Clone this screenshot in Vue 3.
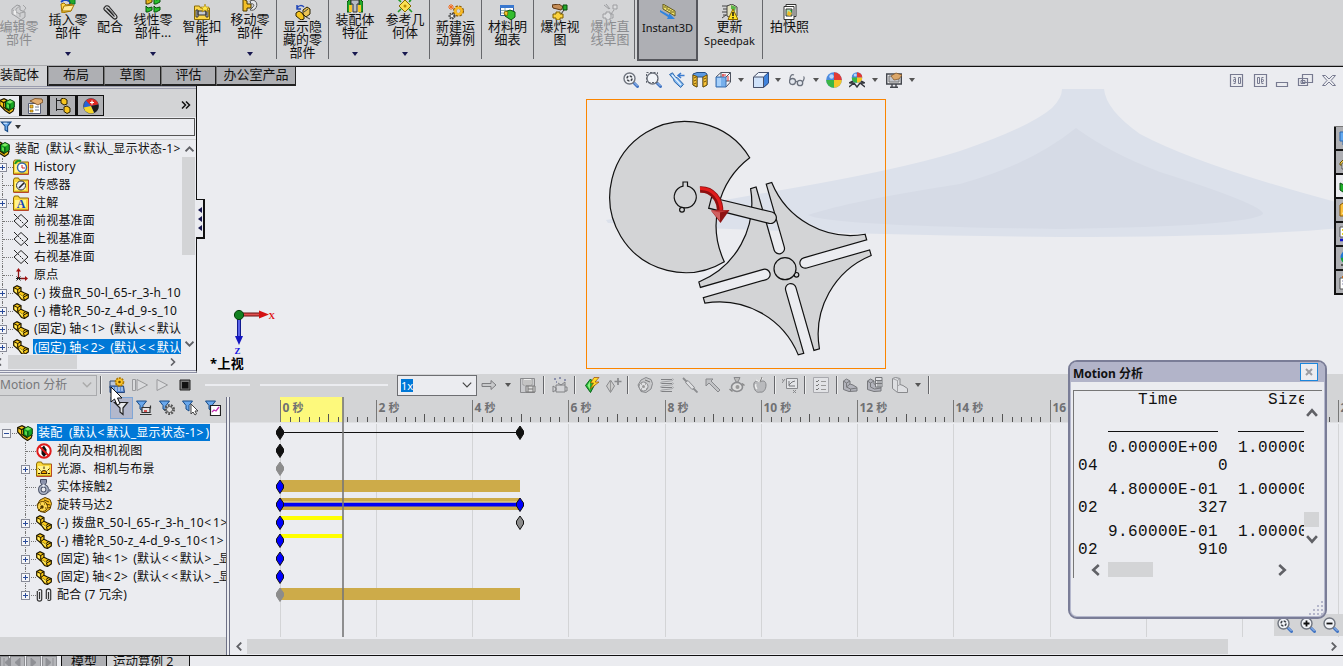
<script setup>
const ribbon = [
  { icon: 'edit-part', lines: ['编辑零', '部件'], w: 46, off: true },
  { icon: 'insert-part', lines: ['插入零', '部件'], w: 52, menu: true },
  { icon: 'clip', lines: ['配合'], w: 32 },
  { icon: 'pattern', lines: ['线性零', '部件...'], w: 54, menu: true },
  { icon: 'fastener', lines: ['智能扣', '件'], w: 44 },
  { icon: 'move-part', lines: ['移动零', '部件'], w: 53, menu: true, sep: true },
  { icon: 'show-part', lines: ['显示隐', '藏的零', '部件'], w: 52, sep: true },
  { icon: 'asm-feature', lines: ['装配体', '特征'], w: 52, menu: true },
  { icon: 'ref-geo', lines: ['参考几', '何体'], w: 49, menu: true, sep: true },
  { icon: 'gears', lines: ['新建运', '动算例'], w: 52, sep: true },
  { icon: 'bom', lines: ['材料明', '细表'], w: 52, sep: true },
  { icon: 'explode', lines: ['爆炸视', '图'], w: 52 },
  { icon: 'explode-off', lines: ['爆炸直', '线草图'], w: 49, off: true, sep: true },
  { icon: 'instant', lines: ['Instant3D'], w: 61, pressed: true },
  { icon: 'speedpak', lines: ['更新', 'Speedpak'], w: 66, sep: true },
  { icon: 'snapshot', lines: ['拍快照'], w: 53 },
]
const isLatin = (s) => /^[A-Za-z0-9]+$/.test(s)
const tabs = [
  { t: '布局', w: 56 },
  { t: '草图', w: 57 },
  { t: '评估', w: 55 },
  { t: '办公室产品', w: 80 },
]
const viewTools = [
  { i: 'zoom-fit', w: 23 }, { i: 'zoom-area', w: 23 }, { i: 'telescope', w: 23 }, { i: 'section', w: 23 },
  { i: 'orient', w: 23 }, { m: 1, w: 14 }, { i: 'cube', w: 25 }, { m: 1, w: 10 }, { i: 'glasses', w: 28 },
  { m: 1, w: 9 }, { i: 'ball', w: 28 }, { i: 'scene', w: 18 }, { m: 1, w: 18 }, { i: 'display', w: 20 }, { m: 1, w: 16 },
]
const featureTree = [
  { icon: 'history', t: 'History', plus: true },
  { icon: 'sensor', t: '传感器' },
  { icon: 'annot', t: '注解', plus: true },
  { icon: 'plane', t: '前视基准面' },
  { icon: 'plane', t: '上视基准面' },
  { icon: 'plane', t: '右视基准面' },
  { icon: 'origin', t: '原点' },
  { icon: 'part', t: '(-) 拨盘R_50-l_65-r_3-h_10', plus: true },
  { icon: 'part', t: '(-) 槽轮R_50-z_4-d_9-s_10', plus: true },
  { icon: 'part', t: '(固定) 轴<1> (默认<<默认', plus: true },
  { icon: 'part', t: '(固定) 轴<2> (默认<<默认', plus: true, sel: true },
]
const motionTree = [
  { icon: 'no-view', t: '视向及相机视图' },
  { icon: 'light', t: '光源、相机与布景', plus: true },
  { icon: 'contact', t: '实体接触2' },
  { icon: 'motor', t: '旋转马达2' },
  { icon: 'part', t: '(-) 拨盘R_50-l_65-r_3-h_10<1>', plus: true },
  { icon: 'part', t: '(-) 槽轮R_50-z_4-d_9-s_10<1>', plus: true },
  { icon: 'part', t: '(固定) 轴<1> (默认<<默认>_显', plus: true },
  { icon: 'part', t: '(固定) 轴<2> (默认<<默认>_显', plus: true },
  { icon: 'mates', t: '配合 (7 冗余)', plus: true },
]
const segs = (t) => t.split(/([<>])/).filter((s) => s !== '')
const isAngle = (s) => s === '<' || s === '>'
const rootName = '装配\u00a0 (默认<默认_显示状态-1>'
const motionTools = [
  { i: 'arrow-right', w: 24 }, { m: 1, w: 14 }, { i: 'save', w: 26 }, { s: 1, w: 5 }, { i: 'wizard', w: 27 },
  { s: 1, w: 4 }, { i: 'autokey', w: 29 }, { i: 'addkey', w: 16 }, { s: 1, w: 12 }, { i: 'motor-off', w: 21 },
  { i: 'spring', w: 24 }, { i: 'damper', w: 22 }, { i: 'force', w: 24 }, { i: 'contact-off', w: 23 },
  { i: 'apple', w: 24 }, { s: 1, w: 5 }, { i: 'plot', w: 26 }, { s: 1, w: 4 }, { i: 'props', w: 28 },
  { s: 1, w: 4 }, { i: 'sim1', w: 22 }, { i: 'sim2', w: 27 }, { i: 'sim3', w: 23 }, { m: 1, w: 14 }, { s: 1, w: 8 },
]
const X0 = 50.5
const STEP = 96.25
const majors = Array.from({ length: 12 }, (_, i) => ({ x: Math.floor(X0 + i * STEP - 0.5) + 0.5, label: i * 2 }))
const minors = Array.from({ length: 111 }, (_, i) => i).filter((i) => i % 10).map((i) => ({
  x: Math.floor(X0 + (i * STEP) / 10) + 0.5, mid: i % 5 === 0,
}))
const keys = [
  { x: 50, r: 0, c: '#111' }, { x: 290, r: 0, c: '#111' },
  { x: 50, r: 1, c: '#111' }, { x: 50, r: 2, c: '#8c8c8c' },
  { x: 50, r: 3, c: '#00f' }, { x: 50, r: 4, c: '#00f' }, { x: 290, r: 4, c: '#00f' },
  { x: 50, r: 5, c: '#00f' }, { x: 290, r: 5, c: '#8c8c8c' },
  { x: 50, r: 6, c: '#00f' }, { x: 50, r: 7, c: '#00f' }, { x: 50, r: 8, c: '#00f' },
  { x: 50, r: 9, c: '#8c8c8c' },
]
const results = [
  ['   0.00000E+00  1.00000', '04            0'],
  ['   4.80000E-01  1.00000', '02          327'],
  ['   9.60000E-01  1.00000', '02          910'],
]
const side = ['bubble', 'home', 'lib', 'file', 'palette', 'globe', 'doc']
</script>

<template>
  <div class="app">
    <svg class="defs" width="0" height="0">
      <symbol id="part" viewBox="0 0 16 16">
        <path d="M.7 2.500L4 .7l4 2v3.500l3 1.500 4.300 2v3.300L11.500 15.500 8.500 14.500 5.500 10.500 .7 6.500z" fill="#f9c716" stroke="#1d1600" stroke-width="1.200" />
        <path d="M.7 2.500l4 2L8 2.700M4.700 4.500v4L10.500 12l4.800-2.300M10.500 12l1 3.500M4.700 8.500L8 6.200M10 10.500l2.500-1.500" fill="none" stroke="#1d1600" />
        <path d="M1.700 4l2 1v3l-2-1.500zM6 9l4 2.500-.5 2L6 10z" fill="#ffee6a" />
      </symbol>
      <symbol id="asm" viewBox="0 0 16 16">
        <path d="M.7 2.500L5 .7l3 1.500v4l7 4-1 3-3.500 2.300L6 12.500.7 7z" fill="#f9c716" stroke="#1d1600" stroke-width="1.200" />
        <path d="M.7 2.500l4 2.200v4.500l6 4M4.700 4.700L8 2.500" fill="none" stroke="#1d1600" stroke-width="1.200" />
        <path d="M6.500 4L11 1.500l4.300 2.200v5.500l-4.500 3-4.300-2.500z" fill="#17a624" stroke="#07380b" />
        <path d="M7.500 4l3.500-1.800 3.300 1.500L11 5.500z" fill="#7bea62" /><path d="M8 6l2 1v3.500L8 9.300z" fill="#5fd84f" /><path d="M10.900 6v5.500" stroke="#07380b" />
      </symbol>
      <symbol id="folder" viewBox="0 0 16 16">
        <path d="M.5 15V3l1-2h4l1 2h9v12z" fill="#fbd83e" stroke="#8a6a00" />
        <path d="M2 5h11v8H2z" fill="#fff48f" />
        <path d="M15.500 3v12.500H.5" fill="none" stroke="#b9472a" />
      </symbol>
      <symbol id="history" viewBox="0 0 16 16">
        <use href="#folder" /><circle cx="9" cy="8.500" r="4.500" fill="#fff" stroke="#3465a8" stroke-width="1.400" />
        <path d="M9 6v3h3" fill="none" stroke="#c22" /><path d="M2 5c1-3 4-4 6-3" fill="none" stroke="#189a24" stroke-width="2" />
      </symbol>
      <symbol id="sensor" viewBox="0 0 16 16">
        <use href="#folder" /><circle cx="8" cy="8.500" r="4.500" fill="#e9eefa" stroke="#333" /><path d="M6 11l5-5" stroke="#222" stroke-width="1.600" />
      </symbol>
      <symbol id="annot" viewBox="0 0 16 16">
        <use href="#folder" /><text x="8" y="13" text-anchor="middle" font-family="Liberation Serif" font-weight="bold" font-size="12" fill="#1745b8">A</text>
      </symbol>
      <symbol id="light" viewBox="0 0 16 16">
        <use href="#folder" /><path d="M5 12.500a3 3 0 0 1 6 0zM8 8V5.500M4.500 9.500l-2-2M11.500 9.500l2-2M2 12.500h2M12 12.500h2" fill="#f6a800" stroke="#3a2000" />
      </symbol>
      <symbol id="plane" viewBox="0 0 16 16">
        <path d="M1 8l7-6.500L15 8l-7 6.500zM1 1l3 3M12 12l3 3" fill="none" stroke="#222" />
        <path d="M4.500 4.500l7 7" stroke="#222" stroke-dasharray="2 1" />
      </symbol>
      <symbol id="origin" viewBox="0 0 16 16">
        <path d="M5.500 12V4M6 11.500h7" stroke="#8b1515" stroke-width="1.300" /><path d="M3 4.500L5.500 1 8 4.500zM12 9l3 2.500-3 2.500z" fill="#a01010" />
        <path d="M3.500 9.500l4 4M7.500 9.500l-4 4M3 11.500h5" stroke="#222" />
      </symbol>
      <symbol id="no-view" viewBox="0 0 16 16">
        <circle cx="8" cy="8" r="6.700" fill="#fff" stroke="#e01b1b" stroke-width="2" />
        <path d="M8 2.500l2.500 4V11L8 14l-2.500-3V5z" fill="#111" /><path d="M3 3l10 10" stroke="#e01b1b" stroke-width="2" />
      </symbol>
      <symbol id="contact" viewBox="0 0 16 16">
        <path d="M4.500 .5h6v3L9 6H6L4.500 3.500z" fill="#8b93ac" stroke="#444a60" /><circle cx="7.500" cy="10.500" r="3.700" fill="none" stroke="#4c5468" stroke-width="3.600" />
        <circle cx="7.500" cy="10.500" r="3.700" fill="none" stroke="#aeb6c9" stroke-width="1.600" /><circle cx="7.500" cy="6.500" r="1.300" fill="#e8ecf5" /><path d="M12 9l3.500 2.500L12 14" fill="#777f95" />
      </symbol>
      <symbol id="motor" viewBox="0 0 16 16">
        <path d="M1 8l3-5 5-2.500 5 2 1.500 4L14 12l-5 3.500-5-1z" fill="#f4bd24" stroke="#5d3f00" />
        <circle cx="6.500" cy="9.500" r="5" fill="#ffd84e" stroke="#5d3f00" /><circle cx="6" cy="10" r="1.700" fill="#4a3200" />
        <path d="M2 14l4-4M8 3l5 2M10 7l4 1M12 11l3-1M4 7h1M8 7h1M9 11h1" stroke="#5d3f00" />
      </symbol>
      <symbol id="mates" viewBox="0 0 16 16">
        <path d="M.8 4v8a2.200 2.200 0 0 0 4.400 0V3.500a1.800 1.800 0 0 0-3.200 0M3 5v7M9.800 12V4a2.200 2.200 0 0 1 4.400 0v8.500a1.800 1.800 0 0 1-3.200 0M12 5v7" transform="translate(.5 0)" fill="none" stroke="#333" stroke-width="1.200" />
      </symbol>
      <symbol id="clip" viewBox="0 0 16 16">
        <path d="M2.500 3.500C3.500 1 6 1.500 7 2.500l7.500 9c1.500 2.500-1 4.500-3 3L2.500 6C1.500 5 2 4 2.500 3.500M4.500 4l8 8.500M7 5l5 6" fill="none" stroke="#222" stroke-width="1.100" />
        <path d="M3.500 5.500l8.500 8M6 3.500l7 8.500" stroke="#a3a4a8" stroke-width=".8" />
      </symbol>
      <symbol id="edit-part" viewBox="0 0 16 16">
        <path d="M1 5l5-4 3 1v4l5 2v5l-4 3-4-3-5-3z" fill="#cfd0d2" stroke="#9b9c9f" /><path d="M5 8V5l4-3M9 13V9l5-1M2 6l3 2 4 2M12 1l3 3-4 5" fill="none" stroke="#a3a4a6" />
        <path d="M3 6l2 1v4l-2-1z" fill="#eee" />
      </symbol>
      <symbol id="insert-part" viewBox="0 0 16 16">
        <path d="M1 5l4-3 6 3M10 1v7" fill="none" stroke="#1a49c2" stroke-width="2" /><path d="M8 1h7v6h-4z" fill="#24aa2a" stroke="#073" />
        <path d="M1 7l3-1 2 2 6-1-1 7-9 2z" fill="#ffd94b" stroke="#a37500" /><path d="M4 9l10-1-3 6H2z" fill="#ffec9b" stroke="#a37500" />
      </symbol>
      <symbol id="pattern" viewBox="0 0 16 16">
        <path d="M1 1v6h2l4-2V2L3 3z" fill="#e8b61b" stroke="#4b3900" /><path d="M9 1v6h2l4-2V2l-4 1zM1 9v6h2l4-2v-3l-4 1zM9 9v6h2l4-2v-3l-4 1z" fill="#2bc02f" stroke="#07520b" />
      </symbol>
      <symbol id="fastener" viewBox="0 0 16 16">
        <path d="M.5 15.500V2h5l1 2h9v11.500z" fill="#fbd64a" stroke="#8a6a00" /><path d="M2 6h2v7H2zM4 7h8v4H4zM12 6h2v7h-2z" fill="#c5cad3" stroke="#333" />
        <path d="M11 0l1 3 3 0-2 2 1 3-3-2-3 2 1-3-2-2h3z" fill="#ffe94c" stroke="#a98000" stroke-width=".6" />
      </symbol>
      <symbol id="move-part" viewBox="0 0 16 16">
        <path d="M1 2v12h4v-3h4V7H5V4z" fill="#f3bf27" stroke="#4b3900" /><path d="M8 4c6-3 9 4 5 8-2 2-5 1-5 1l3-3c2-2 0-4-2-3z" fill="#e4e6ea" stroke="#555" />
      </symbol>
      <symbol id="show-part" viewBox="0 0 16 16">
        <path d="M2 4c2-3 5-3 7-1M2 1v4h4" fill="none" stroke="#2247b8" stroke-width="1.500" /><path d="M1 9l3-2 3 2 2 3v3l-3 1-5-4z" fill="#f6c520" stroke="#2b2100" />
        <path d="M8 6l4-3 3 2v5l-4 3-3-3z" fill="#eac455" stroke="#2b2100" /><path d="M9 8l4-3M11 13l4 2" stroke="#444" />
      </symbol>
      <symbol id="asm-feature" viewBox="0 0 16 16">
        <path d="M0 5l4-4v14H0zM16 5l-4-4v14h4z" fill="#23a62b" stroke="#064d0a" /><path d="M2 8h3v7H2zM11 8h3v7h-3z" fill="#f5c42e" /><path d="M4 3h8v4h-2v8H6V7H4z" fill="#b7bcc6" stroke="#333" />
      </symbol>
      <symbol id="ref-geo" viewBox="0 0 16 16">
        <path d="M8 3l6 6-6 6-6-6z" fill="#fbe052" stroke="#876b00" /><circle cx="8" cy="9" r="1.500" fill="#b88b00" /><path d="M1 15l3-3M12 12l3 3M12 5l2-2M4 5L1 2" stroke="#1e9c26" stroke-width="1.600" /><path d="M11 1l3 1-1 3" fill="#1e9c26" />
      </symbol>
      <symbol id="gears" viewBox="0 0 16 16">
        <circle cx="10.500" cy="7" r="3.800" fill="none" stroke="#8a5a00" stroke-width="3.500" stroke-dasharray="2 1" /><circle cx="10.500" cy="7" r="3.300" fill="none" stroke="#f8ba24" stroke-width="2.400" />
        <circle cx="4" cy="12" r="2.500" fill="none" stroke="#444" stroke-width="2" stroke-dasharray="1.500 .8" /><circle cx="4" cy="12" r="1.700" fill="#eee" stroke="#777" /><path d="M1 1l4 4M5 1L1 5M3 0v6M0 3h6" stroke="#f26b1d" />
      </symbol>
      <symbol id="bom" viewBox="0 0 16 16">
        <path d="M.5 1.500h13v10H.5z" fill="#fff" stroke="#315a9e" /><path d="M0 1h14v3H0z" fill="#3a78cf" /><path d="M1 6.500h12M1 9h12M5 4v7" stroke="#8aa" />
        <path d="M5 8l5-2 5 2v5l-4 3-6-4z" fill="#33bd2e" stroke="#0a570d" /><path d="M5 7l3 1-1 4-3-2z" fill="#f4c42e" stroke="#765900" stroke-width=".7" />
      </symbol>
      <symbol id="explode" viewBox="0 0 16 16">
        <path d="M0 1l7-1 4 3-2 3-4-1-4-1z" fill="#c58d57" stroke="#5a3512" /><path d="M11 1h4v5l-4 0z" fill="#27a92d" stroke="#064d0a" /><path d="M12 6l-3 4v3" fill="none" stroke="#333" />
        <path d="M4 8h4v2h3v4H8v2H4v-2H1v-4h3z" fill="#fbd23c" stroke="#7c5c00" />
      </symbol>
      <symbol id="explode-off" viewBox="0 0 16 16">
        <path d="M2 1l5 4M4 0l4 5M11 1h4v4h-4zM12 6l-3 4v3M4 8h4v2h3v4H8v2H4v-2H1v-4h3z" fill="#dcdddf" stroke="#9c9da0" />
      </symbol>
      <symbol id="instant" viewBox="0 0 16 16">
        <path d="M3 0l12 7v5L3 5z" fill="#f2e36b" stroke="#625a1c" /><path d="M5 2v2M7 3v3M9 5v2M11 6v3M13 7v2" stroke="#625a1c" /><path d="M0 6l9 5 0-2 6 6-8 0 1-2-8-5z" fill="#2f84e0" />
      </symbol>
      <symbol id="speedpak" viewBox="0 0 16 16">
        <path d="M0 2h6M1 5h6M0 8h6M1 11h5M0 14l4-3" stroke="#444" /><path d="M5 2l5-2 5 3v9l-4 3-6-3z" fill="#e4e2c0" stroke="#444" /><path d="M9 1l5 2-1 4-4-2z" fill="#59b546" />
        <path d="M11 5l5 10.500H6z" fill="#ffe224" stroke="#876800" /><path d="M11 8v4M11 13v1.500" stroke="#111" stroke-width="1.500" />
      </symbol>
      <symbol id="snapshot" viewBox="0 0 16 16">
        <path d="M4 .5h10v12H4z" fill="#fff" stroke="#333" /><path d="M2 2.500h10v13H2z" fill="#fff" stroke="#333" /><path d="M4 5h6v7H4z" fill="#aee0ae" stroke="#333" /><path d="M5 11l1-4 4 2-2 3z" fill="#f1b821" /><path d="M8 6h2v3z" fill="#238d2a" />
      </symbol>
      <symbol id="lens" viewBox="0 0 16 16">
        <path d="M10.500 10.500l4 4" stroke="#4476c4" stroke-width="3" stroke-linecap="round" /><path d="M10.500 10l4 4" stroke="#a8c8f4" /><circle cx="6.500" cy="6.500" r="5.500" fill="#f2f4f8" stroke="#70757f" stroke-width="1.400" />
      </symbol>
      <symbol id="zoom-fit" viewBox="0 0 16 16">
        <use href="#lens" /><circle cx="6.500" cy="6.500" r="2.500" fill="none" stroke="#3d4148" stroke-width="1.600" stroke-dasharray="2.500 1.400" />
      </symbol>
      <symbol id="zoom-in" viewBox="0 0 16 16"><use href="#lens" /><path d="M3.500 6.500h6M6.500 3.500v6" stroke="#111" stroke-width="1.800" /></symbol>
      <symbol id="zoom-out" viewBox="0 0 16 16"><use href="#lens" /><path d="M3.500 6.500h6" stroke="#111" stroke-width="1.800" /></symbol>
      <symbol id="zoom-area" viewBox="0 0 16 16"><use href="#lens" /><path d="M.5.5h11v10H.5z" fill="none" stroke="#5f646e" stroke-dasharray="2 1.500" /></symbol>
      <symbol id="telescope" viewBox="0 0 16 16">
        <path d="M.5 2.500L3.500.8l3 4.500 2 .5 6 6.500-2.800 3.200-6.500-6-.7-2.500z" fill="#7ab3ee" stroke="#2e66aa" /><path d="M3 3l9 10" stroke="#e2f1ff" stroke-width="1.500" /><path d="M9 3.500h6.500M12 1L9 3.500 12 6" fill="none" stroke="#3b7bd0" stroke-width="1.600" />
      </symbol>
      <symbol id="section" viewBox="0 0 16 16">
        <path d="M1 2l4-1.500h8l2 1.500v11l-4 2V5H5v10l-4-2z" fill="#5e9be2" stroke="#264f88" /><path d="M1 3l4 1.500V15L1 13zM11 5l4-2v10l-4 2z" fill="#f8c43c" stroke="#745200" /><path d="M2 6l2-1M2 9l2-1M2 12l2-1M12 7l2-1M12 10l2-1" stroke="#745200" />
      </symbol>
      <symbol id="orient" viewBox="0 0 16 16">
        <path d="M1 5l5-4.500h9.500V10L11 15" fill="#f5f5fa" stroke="#4d525e" /><path d="M1 5h10v10H1z" fill="#77b0ec" stroke="#3d6fae" /><path d="M2 6h4v8H2z" fill="#a7d0fa" /><path d="M11 5l4.500-4.500M6 .5V5M11 9h4" stroke="#4d525e" /><path d="M8 2v3M7 3h4M13 4v5" stroke="#d33" />
      </symbol>
      <symbol id="cube" viewBox="0 0 16 16">
        <path d="M.5 5l5-4.500h10V11l-5 4.500H.5z" fill="#eef4fd" stroke="#46506a" /><path d="M10.500 5l5-4.500V11l-5 4.500z" fill="#3f83dd" stroke="#2b4d86" /><path d="M.5 5h10v10.500H.5z" fill="#cfe2fa" stroke="#46506a" />
      </symbol>
      <symbol id="glasses" viewBox="0 0 16 16">
        <circle cx="3.500" cy="9.500" r="3" fill="#e3e7ee" stroke="#6b717d" stroke-width="1.300" /><circle cx="11" cy="11" r="2.700" fill="#e3e7ee" stroke="#6b717d" stroke-width="1.300" /><path d="M6.500 9l2 1M1 8c0-5 2-6 4-5M13.500 10c2-3 2-5 1-5.500" fill="none" stroke="#6b717d" stroke-width="1.200" />
      </symbol>
      <symbol id="ball" viewBox="0 0 16 16">
        <circle cx="8" cy="8" r="7.800" fill="#4b8be0" /><path d="M8 .2A7.800 7.800 0 0 1 15.800 8H8z" fill="#e23b35" /><path d="M8 8h7.800A7.800 7.800 0 0 1 8 15.800z" fill="#f5c529" /><path d="M8 8v7.800A7.800 7.800 0 0 1 .2 8z" fill="#3bb646" /><circle cx="5.500" cy="4.500" r="2.200" fill="#b7d6fb" />
      </symbol>
      <symbol id="scene" viewBox="0 0 16 16">
        <path d="M0 11l4-2h8l4 2M0 15l5-4 3 4 3-4 5 4M1 11h4v2M11 11h4" fill="none" stroke="#33363d" stroke-width="1.400" /><svg x="2.500" y="0" width="11" height="11" viewBox="0 0 16 16"><use href="#ball" /></svg>
      </symbol>
      <symbol id="display" viewBox="0 0 16 16">
        <path d="M.7 2h14.600v10H.7z" fill="#e8e8ea" stroke="#44474e" stroke-width="1.400" /><path d="M3 4h10v6H3z" fill="#c2c5cc" stroke="#777" /><path d="M6 12v3M10 12v3M4 15.300h8" stroke="#44474e" stroke-width="1.400" /><path d="M5 4l5-3 6 2-3 4-5 1z" fill="#dba76a" stroke="#7f5325" stroke-width=".7" />
      </symbol>
      <symbol id="prop" viewBox="0 0 16 16">
        <path d="M1.500 5.500h12v10h-12z" fill="#fff" stroke="#555d77" /><path d="M3 7h3v3H3zM3 12h3v2H3z" fill="#f3b62b" stroke="#765900" stroke-width=".6" /><path d="M8 9h4M8 12h4" stroke="#6f7890" /><path d="M3 3l5-2.500L15 1l1 3-5 3-4-2z" fill="#e0ac70" stroke="#6d4318" stroke-width=".8" />
      </symbol>
      <symbol id="config" viewBox="0 0 16 16">
        <path d="M1.500 0v13M1 2.500h5M1 11.500h7" stroke="#222" /><path d="M6 1l3-1 3 2v4l-3 1-3-2zM9 9l3-1 3 2v4l-3 1.500-3-2z" fill="#f6c520" stroke="#2b2100" />
      </symbol>
      <symbol id="appearance" viewBox="0 0 16 16">
        <circle cx="8" cy="8" r="7.500" fill="#2563d8" stroke="#333" stroke-width=".6" /><path d="M8 8L3 2.400A7.500 7.500 0 0 1 15.300 6.500z" fill="#e02820" /><path d="M8 8l7.300-1.500a7.500 7.500 0 0 1-4.300 8.300z" fill="#1b1b1b" /><path d="M8 8l3 6.800A7.500 7.500 0 0 1 .7 9.500z" fill="#f5d529" /><path d="M9 2.500v4M7 4.500h4" stroke="#fff" stroke-width="1.200" />
      </symbol>
      <symbol id="funnel" viewBox="0 0 16 16"><path d="M1 1.500h13L9.500 7v7l-3.500-2V7z" fill="#6aa8ec" stroke="#174a86" stroke-width="1.400" /><path d="M4 3h5" stroke="#d6ebff" stroke-width="1.500" /></symbol>
      <symbol id="f-clear" viewBox="0 0 16 16"><path d="M1.500 2.500h13L10 8v6.500L7 12V8z" fill="#e6e7ea" stroke="#222" stroke-width="1.200" /></symbol>
      <symbol id="f-small" viewBox="0 0 16 16"><path d="M.5 1h10L7 5.500V11L4 9V5.500z" fill="#6aa8ec" stroke="#174a86" /></symbol>
      <symbol id="f-anim" viewBox="0 0 16 16"><use href="#f-small" /><path d="M6 7.500h8v5H6zM4 14.500h11.500M14.500 8.500V5.500" fill="#e2e2e4" stroke="#333" stroke-width="1.200" /><path d="M8 11h3" stroke="#c22" stroke-width="1.500" /></symbol>
      <symbol id="f-gear" viewBox="0 0 16 16"><use href="#f-small" /><circle cx="10.500" cy="9.500" r="4" fill="#eee" stroke="#555" stroke-width="3" stroke-dasharray="1.700 1.100" /><circle cx="10.500" cy="9.500" r="3" fill="#ddd" stroke="#555" /></symbol>
      <symbol id="f-sel" viewBox="0 0 16 16"><use href="#f-small" /><path d="M9 4v10l2-2 2 3 1.500-1-1.500-3h3z" fill="#fff" stroke="#444" /></symbol>
      <symbol id="f-plot" viewBox="0 0 16 16"><use href="#f-small" /><path d="M5.500 5.500h10v10h-10z" fill="#fff" stroke="#222" stroke-width="1.200" /><path d="M7 12l2-2 2 1 3-4" fill="none" stroke="#c02bb0" stroke-width="1.300" /></symbol>
      <symbol id="calc" viewBox="0 0 16 16">
        <path d="M1 4h8v7H1z" fill="#b9c6dc" stroke="#30486d" /><path d="M1 9h13.500l1 6.500H1z" fill="#5c8bd0" stroke="#23447c" /><path d="M3 11h11M3 13h11" stroke="#dce8fa" stroke-dasharray="2 1" /><circle cx="10.500" cy="5" r="3.800" fill="#f9c326" stroke="#b07a00" stroke-width="2" stroke-dasharray="2 .8" /><circle cx="10.500" cy="5" r="3" fill="#f9c326" /><circle cx="10.500" cy="5" r="1.300" fill="#704a00" />
      </symbol>
      <symbol id="play-start" viewBox="0 0 16 16"><path d="M.5 2.500h3v11h-3zM5 2.500v11L15.500 8z" fill="#dadbdd" stroke="#999a9d" /></symbol>
      <symbol id="play" viewBox="0 0 16 16"><path d="M3 2.500v11L13.500 8z" fill="#dadbdd" stroke="#999a9d" /></symbol>
      <symbol id="stop" viewBox="0 0 16 16"><path d="M3 3h10v10H3z" fill="#777" stroke="#222" /><path d="M5 5h6.500v6.500H5z" fill="#111" /></symbol>
      <symbol id="arrow-right" viewBox="0 0 16 16"><path d="M1 6.500h9v-3L15 8l-5 4.500v-3H1z" fill="#c8c9cb" stroke="#7c7d80" /></symbol>
      <symbol id="save" viewBox="0 0 16 16"><path d="M.5 1.500h14v14H.5z" fill="#c9cacd" stroke="#8a8b8e" /><path d="M3 2v6h9V2M4 4h7M4 6h7" fill="#eee" stroke="#999" /><path d="M6 9h9v6H6zM8 9v6M13 9v6M8 12h5" fill="#ddd" stroke="#777" /></symbol>
      <symbol id="wizard" viewBox="0 0 16 16"><path d="M2 2h2M7 1h2M12 3h2M4 5h1" stroke="#777ba0" stroke-width="1.500" /><path d="M4 8h9v7H4zM1 9l3 2v2l-3 2zM6 6l3 2 4-3v3M13 10h2v4h-2" fill="#d4d5d8" stroke="#808184" /></symbol>
      <symbol id="autokey" viewBox="0 0 16 16"><path d="M6.500 2l4.500 5-4.500 8.500L1.500 8.500z" fill="#22b636" stroke="#086418" /><path d="M6 4v9L3.500 8.500z" fill="#8cf080" /><path d="M10 .5L6.500 6h3L6 12l9-7h-4l4-4.500z" fill="#ffdc28" stroke="#9d4a00" stroke-width=".7" /></symbol>
      <symbol id="addkey" viewBox="0 0 16 16"><path d="M4.500 3l4 6-4 6.500L.5 9z" fill="#ccc" stroke="#8a8b8e" /><path d="M4.500 3v12" stroke="#999" /><path d="M12 1v7M8.500 4.500h7" stroke="#88898c" stroke-width="1.700" /></symbol>
      <symbol id="motor-off" viewBox="0 0 16 16"><path d="M1 8l3-5 5-2.500 5 2 1.500 4L14 12l-5 3.500-5-1z" fill="#c8c9cb" stroke="#88898c" /><circle cx="6.500" cy="9.500" r="4.500" fill="#dedfe1" stroke="#88898c" /><circle cx="6.500" cy="9.500" r="1.500" fill="#999" /><path d="M8 3l5 2M4 7h1M8 7h1M4 12h1M9 12h1" stroke="#777" /></symbol>
      <symbol id="spring" viewBox="0 0 16 16"><path d="M2 2.500h11M2 6.500h11M2 10.500h11M2 14.500h11" stroke="#808184" /><path d="M13.500 1.500c2 1 0 2.500-2 2.500L3 5c-2 .5-2 1.500 0 1.500M13.500 5.500c2 1 0 2.500-2 2.500L3 9c-2 .5-2 1.500 0 1.500M13.500 9.500c2 1 0 2.500-2 2.500L3 13c-2 .5-2 1.500 0 1.500" fill="none" stroke="#a2a3a6" /></symbol>
      <symbol id="damper" viewBox="0 0 16 16"><path d="M1 1l4 4M11 11l4.500 4.500" stroke="#8b8c8f" stroke-width="1.800" /><path d="M3.500 5.500l2.500-2 6.500 7-2.500 2z" fill="#dedfe1" stroke="#8b8c8f" /></symbol>
      <symbol id="force" viewBox="0 0 16 16"><path d="M1 9V2h7L6 4l9 9-2 2-9-9z" fill="#c1c2c5" stroke="#88898c" /></symbol>
      <symbol id="contact-off" viewBox="0 0 16 16"><path d="M5 .5h6L9 5H7z" fill="#bbb" stroke="#88898c" /><ellipse cx="8" cy="10" rx="5.500" ry="4.500" fill="#ddd" stroke="#8b8c8f" stroke-width="1.600" /><circle cx="8.500" cy="10" r="2" fill="#999" /><path d="M13 6.500l2.500 2M.5 12l3 2.500" stroke="#888" stroke-width="1.600" /></symbol>
      <symbol id="apple" viewBox="0 0 16 16"><path d="M8 5C3 2 1 6 2 10c1 5 4 6 6 5 3 1 6-2 6-7 0-4-3-5-6-3z" fill="#b9babd" stroke="#88898c" /><path d="M8 5c0-3 1-4 3-4M4 3l4 2M4 7c-1 2 0 4 1 5" fill="none" stroke="#eee" stroke-width="1.300" /><path d="M8 5l2-5" stroke="#777" /></symbol>
      <symbol id="plot" viewBox="0 0 16 16"><path d="M4.500 1.500h11v10h-11z" fill="#e4e5e8" stroke="#88898c" /><path d="M7 4v5h6M7 8l3-3 3-1" fill="none" stroke="#75767a" /><path d="M0 2l1.500 2M3 2L0 6M11 13l3 3M14 13l-3 3" stroke="#88898c" /></symbol>
      <symbol id="props" viewBox="0 0 16 16"><path d="M.5.5h15v15H.5z" fill="#e2e3e6" stroke="#a8a9ae" /><path d="M3 4l1 1 2-2M3 8l1 1 2-2M3 12l1 1 2-2" fill="none" stroke="#777" /><path d="M8 4.500h5M8 8.500h5M8 12.500h5" stroke="#999" /></symbol>
      <symbol id="sim1" viewBox="0 0 16 16"><path d="M1.500 4l3-2 3.500 2v3l3 1 4 2.500V14l-8 .5-5.500-2z" fill="#b2b3bb" stroke="#77787c" /><path d="M1.500 4l3 2v4l4 2 6.500-1M4.500 6L8 4M4.500 10L8 7M8.500 12v2.500" fill="none" stroke="#77787c" /></symbol>
      <symbol id="sim2" viewBox="0 0 16 16"><path d="M.5 4l3-2L7 4v3l3 1 4 2.500V14l-7 .5-6.500-2z" fill="#b2b3bb" stroke="#77787c" /><path d="M.5 4l3 2v4l4 2 6.500-1M3.500 6L7 4" fill="none" stroke="#77787c" /><path d="M8.500.5h6.500v9.500H8.500zM9 3.500h6M11 3v7M13 3v7M9 6.500h6" fill="#e2e3e6" stroke="#77787c" /></symbol>
      <symbol id="sim3" viewBox="0 0 16 16"><path d="M.5 1.500l3-1L8 1.500v6l3 1 4.500 3v4H5.500l-5-4z" fill="#dedfe2" stroke="#88898c" /><path d="M.5 1.500l5 2v12M5.500 3.500L8 1.500M5.500 9L8 7.500" fill="none" stroke="#a2a3a6" /></symbol>
      <symbol id="bubble" viewBox="0 0 16 16"><path d="M1 2h14v9H8l-4 4v-4H1z" fill="#62a9f0" stroke="#2b66ae" /></symbol>
      <symbol id="home" viewBox="0 0 16 16"><path d="M1 9l7-7 7 7v2H1z" fill="#f6ce4a" stroke="#665000" /><path d="M3 9h10v6H3z" fill="#fff" stroke="#555" /></symbol>
      <symbol id="lib" viewBox="0 0 16 16"><path d="M1 5l6 3 6-4v8l-6 4-6-4z" fill="#1eaf2a" stroke="#0a4d10" /></symbol>
      <symbol id="file" viewBox="0 0 16 16"><path d="M1 3l3-2h9v13H1z" fill="#f9bf3d" stroke="#8b5b00" /><path d="M3 12l3-7 6-1v8z" fill="#fff0ab" /></symbol>
      <symbol id="palette" viewBox="0 0 16 16"><path d="M1 1h14v10H1z" fill="#fff" stroke="#555" /><path d="M3 3h3v2H3zM3 7h3v2H3z" fill="#e5d31a" /><path d="M1 14h14" stroke="#1111c8" stroke-width="2.500" /></symbol>
      <symbol id="globe" viewBox="0 0 16 16"><circle cx="8" cy="7" r="6.500" fill="#1f77d6" /><path d="M2 8l5-1v6C4 13 2 11 2 8z" fill="#18a832" /><path d="M2 15h10" stroke="#555" stroke-width="2" /></symbol>
      <symbol id="doc" viewBox="0 0 16 16"><path d="M1 4h14v11H1z" fill="#fff" stroke="#555" /><path d="M3 3h4" stroke="#c76a1a" stroke-width="2" /><path d="M3 7h9M3 10h9" stroke="#88a" /></symbol>
    </svg>

    <header class="ribbon">
      <div v-for="b in ribbon" :key="b.icon" class="cmd" :class="{ off: b.off, menu: b.menu, sep: b.sep, pressed: b.pressed }" :style="{ width: b.w + 'px' }">
        <div class="cmd-head"><svg class="ic"><use :href="'#' + b.icon" /></svg></div>
        <span v-for="l in b.lines" :key="l" class="cmd-line" :class="{ latin: isLatin(l) }">{{ l }}</span>
        <i v-if="b.menu" class="tri navy"></i>
      </div>
    </header>

    <main class="work">
      <section class="left">
        <nav class="cm-tabs">
          <span class="cm-tab on">装配体</span>
          <span v-for="t in tabs" :key="t.t" class="cm-tab" :style="{ width: t.w + 'px' }">{{ t.t }}</span>
        </nav>
        <div class="panel">
          <div class="panel-tabs">
            <span class="pt on"><svg class="ic"><use href="#asm" /></svg></span>
            <span class="pt"><svg class="ic"><use href="#prop" /></svg></span>
            <span class="pt"><svg class="ic"><use href="#config" /></svg></span>
            <span class="pt"><svg class="ic"><use href="#appearance" /></svg></span>
            <svg class="more" viewBox="0 0 10 8"><path d="M1 .5L4.500 4 1 7.500M5 .5L8.500 4 5 7.500" fill="none" stroke="#111" stroke-width="1.500" /></svg>
          </div>
          <div class="filter"><svg class="fic"><use href="#funnel" /></svg><i class="tri"></i></div>
          <div class="tree-wrap">
            <div class="tree">
              <div class="row root"><svg class="ic"><use href="#asm" /></svg><span class="tx"><span v-for="(s, j) in segs(rootName)" :key="j" :class="{ an: isAngle(s) }">{{ s }}</span></span></div>
              <div v-for="(n, k) in featureTree" :key="k" class="row kid">
                <span class="twig"><b v-if="n.plus" class="box"></b></span>
                <svg class="ic"><use :href="'#' + n.icon" /></svg>
                <span class="tx" :class="{ sel: n.sel }"><span v-for="(s, j) in segs(n.t)" :key="j" :class="{ an: isAngle(s) }">{{ s }}</span></span>
              </div>
            </div>
            <div class="vbar">
              <svg viewBox="0 0 8 5"><path d="M.5 4.500L4 1l3.500 3.500" /></svg>
              <div class="vthumb"></div>
              <svg viewBox="0 0 8 5"><path d="M.5.5L4 4 7.500.5" /></svg>
            </div>
          </div>
          <div class="hbar">
            <svg viewBox="0 0 5 8"><path d="M4.500.5L1 4l3.500 3.500" /></svg>
            <div class="hthumb"></div>
            <svg viewBox="0 0 5 8"><path d="M.5.5L4 4 .5 7.500" /></svg>
          </div>
        </div>
      </section>

      <section class="view">
        <svg class="scene" width="1146" height="306" viewBox="197 67 1146 306">
          <path d="M606 220Q700 205 770 192 900 170 960 151 1030 127 1052 108 1062 98 1062 89L1104 89Q1106 110 1140 134 1200 166 1343 204V228Q1240 237 1060 237 800 234 608 223Z" fill="#dce1eb" />
          <path d="M808 215Q850 201 960 184 1030 165 1076 128 1110 153 1160 172 1264 205 1263 214 1250 226 1060 229 830 226 808 215Z" fill="#d6dbe6" />
          <rect x="586.500" y="99.500" width="299" height="269" fill="none" stroke="#fb8500" />
          <g stroke="#111" stroke-width="1.200" fill="#d3d4d6">
            <path d="M749.700 157.700A75.500 75.500 0 1 0 724.300 261.700A85 85 0 0 1 749.700 157.700Z" />
            <path transform="translate(785 268.700) rotate(-16)" d="M-5.300-86.500V-21A5.300 5.300 0 0 0 5.300-21V-86.500H11A85.400 85.400 0 0 0 86.500-11V-5.300H21A5.300 5.300 0 0 0 21 5.300H86.500V11A85.400 85.400 0 0 0 11 86.500H5.300V21A5.300 5.300 0 0 0-5.300 21V86.500H-11A85.400 85.400 0 0 0-86.500 11V5.300H-21A5.300 5.300 0 0 0-21-5.300H-86.500V-11A85.400 85.400 0 0 0-11-86.500Z" />
            <path d="M711.500 197.500L772 212A5.700 5.700 0 0 1 769 223.300L708.700 208.200Z" />
            <path d="M683 186.200V182H687.500V186.200A11 11 0 1 1 683 186.200Z" />
            <circle cx="682" cy="209.700" r="2.400" /><circle cx="796.500" cy="274.800" r="2.300" /><circle cx="785" cy="268.700" r="11" />
          </g>
          <path d="M700 189.500C712 189 721 199 720 213" fill="none" stroke="#8e0f0f" stroke-width="6.500" />
          <path d="M700 188.500C713 188 721.500 199 721 212" fill="none" stroke="#e01c1c" stroke-width="3" />
          <path d="M711 210.500L729.500 210 720.500 223Z" fill="#8e1414" /><path d="M711 210.500L720 211.500V221Z" fill="#d06060" /><path d="M711 210.500h18l-9 2z" fill="#c23a3a" />
          <path d="M241 314.500h18" stroke="#6b1010" stroke-width="4" /><path d="M241 314.500h18" stroke="#e05050" stroke-width="2" /><path d="M259 310.500l10 4-10 4z" fill="#d41212" />
          <path d="M239 316v22" stroke="#111a90" stroke-width="4" /><path d="M239 316v22" stroke="#5a62e8" stroke-width="2" /><path d="M235 336h8l-4 9z" fill="#1414c0" />
          <circle cx="239" cy="315" r="4.600" fill="#128020" stroke="#063d0c" />
          <text class="ax" x="268.500" y="319" fill="#e01010">X</text><text class="ax" x="234.500" y="354" fill="#1414e0">Z</text>
          <text class="vn" x="210" y="368">*上视</text>
        </svg>
        <div class="view-tools">
          <span v-for="(t, k) in viewTools" :key="k" class="cell" :style="{ width: t.w + 'px' }">
            <i v-if="t.m" class="tri grey"></i><svg v-else class="ic"><use :href="'#' + t.i" /></svg>
          </span>
        </div>
        <svg class="win" width="110" height="16" viewBox="0 0 110 16" fill="none" stroke="#777a90">
          <path d="M2.500 2.500h12v12h-12zM26.500 2.500h12v12h-12z" stroke-width="1.200" />
          <path d="M7.500 5.500h-2M5.500 11.500h2M5 8.500l2.500-2v4zM10.500 5.500h2v6h-2zM29.500 5.500h2v6h-2zM33.500 5.500h2M33.500 11.500h2M36 8.500l-2.500-2v4z" />
          <path d="M48.500 10.500h11v4h-11zM74.500 2.500h10v8h-10zM70.500 6.500h9v7h-9z" stroke-width="1.200" /><path d="M73 8.500h4v3h-4z" />
          <path d="M94.500 3.500h3l3.500 3.500 3.500-3.500h3L103 8.500l4.500 5h-3l-3.500-3.500-3.500 3.500h-3l4.500-5z" />
        </svg>
        <div class="handle"><i></i><i></i><i></i></div>
        <div class="side"><span v-for="s in side" :key="s" :class="{ lit: s === 'lib' }"><svg class="ic"><use :href="'#' + s" /></svg></span></div>
      </section>
    </main>

    <div class="mbar">
      <div class="study">Motion 分析<svg viewBox="0 0 8 5"><path d="M.5.5L4 4 7.500.5" fill="none" stroke="#aaa" stroke-width="1.200" /></svg></div>
      <span class="cell c8"><b class="vs"></b></span>
      <span class="cell c24"><svg class="ic"><use href="#calc" /></svg></span>
      <span class="cell c21"><svg class="ic"><use href="#play-start" /></svg></span>
      <span class="cell c23"><svg class="ic"><use href="#play" /></svg></span>
      <span class="cell c23"><svg class="ic"><use href="#stop" /></svg></span>
      <span class="slider"><b></b><b class="long"></b></span>
      <div class="speed"><em>1x</em><svg viewBox="0 0 8 5"><path d="M.5.5L4 4 7.500.5" fill="none" stroke="#444" /></svg></div>
      <span v-for="(t, k) in motionTools" :key="k" class="cell" :style="{ width: t.w + 'px' }">
        <i v-if="t.m" class="tri grey"></i><b v-else-if="t.s" class="vs"></b><svg v-else class="ic"><use :href="'#' + t.i" /></svg>
      </span>
      <svg class="cursor" width="14" height="20" viewBox="0 0 14 20"><path d="M1 1v15l3.500-3 2.500 6 3-1.300-2.500-5.700H12z" fill="#fff" stroke="#111" /></svg>
    </div>

    <div class="motion">
      <section class="mtree">
        <div class="filters">
          <span class="fb on"><svg class="ic"><use href="#f-clear" /></svg></span>
          <span class="fb"><svg class="ic"><use href="#f-anim" /></svg></span>
          <span class="fb"><svg class="ic"><use href="#f-gear" /></svg></span>
          <span class="fb"><svg class="ic"><use href="#f-sel" /></svg></span>
          <span class="fb"><svg class="ic"><use href="#f-plot" /></svg></span>
        </div>
        <div class="mrows">
          <div class="row mroot"><span class="lead"><b class="box minus"></b></span><svg class="ic"><use href="#asm" /></svg><span class="tx sel fit"><span v-for="(s, j) in segs(rootName + ')')" :key="j" :class="{ an: isAngle(s) }">{{ s }}</span></span></div>
          <div v-for="(n, k) in motionTree" :key="k" class="row mkid" :class="{ last: k === motionTree.length - 1 }">
            <span class="twig"><b v-if="n.plus" class="box"></b></span>
            <svg class="ic"><use :href="'#' + n.icon" /></svg>
            <span class="tx"><span v-for="(s, j) in segs(n.t)" :key="j" :class="{ an: isAngle(s) }">{{ s }}</span></span>
          </div>
        </div>
        <div class="mfoot"></div>
      </section>
      <section class="time">
        <svg width="1113" height="240" viewBox="0 0 1113 240">
          <rect width="1113" height="25.500" fill="#d3d4d6" /><rect x="50" width="63" height="25" fill="#fdf97c" />
          <path v-for="m in majors" :key="'g' + m.label" :d="`M${m.x} 27V240`" stroke="#d3d4d6" />
          <path v-for="m in majors" :key="'m' + m.label" :d="`M${m.x} 3V25`" stroke="#777" />
          <path v-for="m in minors" :key="m.x" :d="`M${m.x} ${m.mid ? 17 : 20}V25`" stroke="#555" />
          <text v-for="m in majors" :key="'t' + m.label" class="sec" :x="m.x + 2" y="14.500">{{ m.label }}<tspan class="cj" dx="3">秒</tspan></text>
          <path d="M50 35.500H290" stroke="#111" />
          <path d="M50 89H290M50 107H290M50 197H290" stroke="#cdab49" stroke-width="12" />
          <path d="M50 107.500H290" stroke="#0000f5" stroke-width="4" /><path d="M50 105H290" stroke="#e8d8a0" stroke-width="1" />
          <path d="M50 121H113M50 139H113" stroke="#ff0" stroke-width="4" />
          <path d="M113 0V240" stroke="#777" stroke-width="1.600" />
          <path v-for="(k, n) in keys" :key="n" :transform="`translate(${k.x} ${35.5 + k.r * 18})`" d="M0-6.500L3.500-1.500V1.500L0 7-3.500 1.500V-1.500Z" :fill="k.c" :stroke="k.x === 290 || k.c === '#00f' ? '#111' : k.c" />
        </svg>
        <div class="tbar"><svg viewBox="0 0 5 8"><path d="M4.500.5L1 4l3.500 3.500" /></svg><div class="tthumb"></div><svg viewBox="0 0 5 8"><path d="M.5.5L4 4 .5 7.500" /></svg></div>
      </section>
      <div class="zooms"><svg class="ic"><use href="#zoom-fit" /></svg><svg class="ic"><use href="#zoom-in" /></svg><svg class="ic"><use href="#zoom-out" /></svg></div>
    </div>

    <footer class="studies">
      <span v-for="d in ['M9 1L4 5.500 9 10zM3 1v9', 'M9 1L4 5.500 9 10z', 'M4 1l5 4.500L4 10z', 'M3 1l5 4.500L3 10zM10 1v9']" :key="d" class="nv"><svg viewBox="0 0 13 11"><path :d="d" fill="#8f9095" stroke="#8f9095" /></svg></span>
      <span class="st model">模型</span><span class="st cur">运动算例 2</span>
    </footer>

    <svg class="expand" width="16" height="16" viewBox="0 0 16 16"><circle cx="8" cy="8" r="7" fill="#e9ecf6" stroke="#8a8ea4" /><path d="M4.500 4L8 7l3.500-3M4.500 8.500L8 11.500l3.500-3" fill="none" stroke="#1b3fb0" stroke-width="1.700" /></svg>

    <aside class="dlg">
      <div class="dlg-title"><span>Motion 分析</span><i><svg viewBox="0 0 8 8"><path d="M1 1l6 6M7 1L1 7" stroke="#9a9ca2" stroke-width="2" /></svg></i></div>
      <div class="dlg-body">
        <div class="log">
          <pre class="lh">      Time         Size</pre>
          <div class="rule"><b></b><b></b></div>
          <div v-for="r in results" :key="r[0]" class="rec"><pre>{{ r[0] }}</pre><pre>{{ r[1] }}</pre></div>
          <div class="lbar"><svg viewBox="0 0 8 11"><path d="M7 1L2 5.500 7 10" /></svg><b></b><svg viewBox="0 0 8 11"><path d="M1 1l5 4.500L1 10" /></svg></div>
        </div>
        <div class="lv"><svg viewBox="0 0 11 8"><path d="M1 7l4.500-5L10 7" /></svg><b></b><svg viewBox="0 0 11 8"><path d="M1 1l4.500 5L10 1" /></svg></div>
      </div>
      <svg class="grip" width="14" height="14" viewBox="0 0 14 14" fill="#b5b7cb"><path d="M12 0h2v2h-2zM8 4h2v2H8zM12 4h2v2h-2zM4 8h2v2H4zM8 8h2v2H8zM12 8h2v2h-2zM0 12h2v2H0zM4 12h2v2H4zM8 12h2v2H8zM12 12h2v2h-2z" /></svg>
    </aside>
  </div>
</template>

<style>
html, body { background: #ebecf0; overflow: hidden; }
</style>

<style scoped>
* { box-sizing: border-box; }
.app { position: relative; width: 1343px; height: 666px; overflow: hidden; display: flex; flex-direction: column; background: #ebecf0; color: #111; font: 12px/18px "Noto Sans", "Noto Sans CJK SC", sans-serif; }
.defs { position: absolute; }
.ic { width: 16px; height: 16px; flex: none; display: block; overflow: visible; }
.tri { width: 0; height: 0; border: 3px solid transparent; border-top: 4px solid #333; border-bottom: 0; }
.tri.navy { border-top-color: #17174f; }
.tri.grey { border-top-color: #555; }

.ribbon { height: 67px; flex: none; display: flex; background: #d3d4d6; border-bottom: 1px solid #111; box-shadow: inset 0 -1px #a9aaad; overflow: hidden; padding-bottom: 6px; }
.cmd { flex: none; height: 59px; display: flex; flex-direction: column; align-items: center; font-size: 13px; line-height: 13px; }
.cmd:first-child { margin-left: -4px; }
.cmd.sep { border-right: 1px solid #66676b; }
.cmd.off { color: #8b8c8f; }
.cmd-head { height: 20px; display: flex; align-items: flex-end; }
.cmd.menu .cmd-head { height: 13px; }
.cmd-line { white-space: nowrap; height: 13px; }
.cmd-line.latin { font-size: 11px; line-height: 15px; }
.cmd .tri { margin-top: 13px; }
.cmd.pressed { height: 61px; background: #aeafb4; border: 2px solid #55565c; border-top: 0; margin-left: 2px; margin-right: -1px; }

.work { flex: none; height: 306px; display: flex; }
.left { position: relative; width: 197px; flex: none; display: flex; flex-direction: column; z-index: 2; }
.cm-tabs { display: flex; width: 296px; height: 20px; flex: none; font-size: 13px; line-height: 15px; margin-top: -1px; }
.cm-tab { background: #aeafb3; border: 1px solid #222; border-left-color: #777; border-bottom-width: 2px; text-align: center; white-space: nowrap; height: 20px; }
.cm-tab.on { width: 48px; height: 22px; background: #d3d4d6; border: 0; border-right: 1px solid #111; text-align: left; line-height: 17px; }
.panel { flex: 1; display: flex; flex-direction: column; border-right: 1px solid #111; border-bottom: 3px double #8d90a5; background: #ebecf0; overflow: hidden; }
.panel-tabs { height: 31px; flex: none; display: flex; align-items: flex-end; background: #d3d4d6; border-top: 3px double #9a9cad; border-bottom: 1px solid #d3d4d6; }
.pt { width: 28px; height: 21px; border: 1px solid #111; border-left-width: 2px; background: #b0b1b4; display: flex; align-items: center; justify-content: center; }
.pt.on { width: 20px; background: #ebecf0; border-left: 0; border-bottom: 0; padding-right: 6px; }
.more { width: 10px; height: 8px; margin: 0 0 7px 77px; }
.filter { height: 18px; flex: none; width: 195px; border: 1px solid #555; border-left: 0; display: flex; align-items: center; gap: 2px; margin-top: 1px; }
.fic { width: 13px; height: 12px; }
.tree-wrap { flex: 1; min-height: 0; display: flex; margin-top: 3px; border-top: 1px solid #d3d4d6; }
.tree { width: 181px; overflow: hidden; height: 214px; }
.row { display: flex; align-items: center; height: 18px; white-space: nowrap; }
.tx { height: 18px; line-height: 18px; letter-spacing: .2px; }
.an { letter-spacing: 2px; margin-left: .3px; }
.root .ic { margin-left: -6px; margin-right: 5px; }
.twig { position: relative; width: 34px; height: 18px; flex: none; }
.twig::before { content: ""; position: absolute; left: 2px; top: 0; height: 18px; border-left: 1px dotted #777; }
.twig::after { content: ""; position: absolute; left: 3px; top: 9px; width: 10px; border-top: 1px dotted #777; }
.box { position: absolute; z-index: 1; left: -2px; top: 5px; width: 9px; height: 9px; border: 1px solid #888b98; background: linear-gradient(#2a4b9a, #2a4b9a) center/5px 1px no-repeat, linear-gradient(#2a4b9a, #2a4b9a) center/1px 5px no-repeat, #f4f5f8; }
.box.minus { background: linear-gradient(#2a4b9a, #2a4b9a) center/5px 1px no-repeat, #f4f5f8; }
.kid .twig { width: 13px; }
.kid .ic { margin-right: 4px; }
.kid .tx { padding-left: 1px; }
.tx.sel { background: #0078d7; color: #fff; flex: 1; height: 17px; line-height: 17px; }
.vbar { width: 15px; display: flex; flex-direction: column; align-items: center; padding: 6px 0 6px; }
.vbar svg, .hbar svg, .tbar svg, .lbar svg, .lv svg { fill: none; stroke: #606166; stroke-width: 1.6; flex: none; }
.vbar svg { width: 9px; height: 6px; margin-left: 1px; }
.vbar .vthumb { width: 13px; height: 98px; background: #d3d4d6; margin: 5px 0 auto; }
.hbar { height: 17px; flex: none; display: flex; align-items: center; }
.hbar svg { width: 6px; height: 8px; }
.hbar svg:first-child { margin-left: -4px; }
.hthumb { width: 69px; height: 14px; background: #d3d4d6; margin: 0 93px 0 6px; }

.view { position: relative; flex: 1; }
.scene { display: block; }
.ax { font: bold 9px "Liberation Serif", serif; }
.vn { font: bold 13px "Noto Sans", "Noto Sans CJK SC", sans-serif; letter-spacing: .4px; }
.view-tools { position: absolute; left: 422px; top: 5px; display: flex; height: 16px; }
.cell { display: flex; align-items: center; justify-content: center; flex: none; }
.win { position: absolute; right: 5px; top: 5px; }
.handle { position: absolute; z-index: 3; left: -1px; top: 132px; width: 9px; height: 40px; border: 1px solid #111; border-width: 1px 2px 2px 0; background: #ebecf0; display: flex; flex-direction: column; align-items: center; justify-content: center; gap: 3px; }
.handle i { border: 3px solid transparent; border-right: 4px solid #17174f; border-left: 0; }
.side { position: absolute; right: 0; top: 59px; width: 9px; display: flex; flex-direction: column; overflow: hidden; border-top: 1px solid #777; }
.side span { height: 24px; border-left: 2px solid #111; border-bottom: 2px solid #111; background: #aeafb3; padding: 3px 0 0 3px; }
.side span.lit { background: #ebecf0; }

.mbar { position: relative; z-index: 3; height: 23px; flex: none; display: flex; align-items: center; background: #d3d4d6; margin-top: 1px; padding-bottom: 1px; }
.study { width: 97px; height: 21px; border: 1px solid #a9aaad; border-left: 0; color: #77787b; line-height: 20px; display: flex; justify-content: space-between; align-items: center; padding-right: 4px; white-space: nowrap; }
.study svg, .speed svg { width: 10px; height: 6px; }
.c8 { width: 8px; } .c24 { width: 24px; } .c21 { width: 21px; } .c23 { width: 23px; }
.vs { width: 2px; height: 18px; border-left: 1px solid #66676b; border-right: 1px solid #eee; }
.slider { width: 201px; padding-left: 9px; display: flex; gap: 10px; }
.slider b { width: 45px; height: 2px; background: #ebecf0; }
.slider b.long { width: 128px; }
.speed { width: 80px; height: 21px; border: 1px solid #6d6e72; background: #ebecf0; display: flex; align-items: center; justify-content: space-between; padding: 0 4px 0 3px; }
.speed em { font-style: normal; background: #0078d7; color: #fff; line-height: 13px; height: 13px; font-size: 11px; }
.cursor { position: absolute; left: 110px; top: 12px; }

.motion { position: relative; flex: none; height: 258px; display: flex; }
.mtree { width: 230px; flex: none; display: flex; flex-direction: column; border-right: 4px double #6e7186; }
.filters { height: 26px; flex: none; background: #d3d4d6; display: flex; padding-left: 110px; align-items: flex-start; }
.fb { width: 23px; height: 22px; display: flex; align-items: center; justify-content: center; padding-right: 1px; }
.fb.on { border: 1px solid #7fa6d6; background: #b3b8cc; }
.mrows { flex: 1; overflow: hidden; padding-top: 1px; }
.mroot .lead { position: relative; width: 17px; height: 18px; flex: none; }
.mroot .lead::after { content: ""; position: absolute; left: 12px; top: 9px; width: 5px; border-top: 1px dotted #777; }
.lead .box { left: 2px; }
.mroot .ic { margin-right: 4px; }
.tx.fit { flex: none; padding-right: 1px; padding-left: 1px; }
.mroot .tx { margin-bottom: 1px; }
.mkid .twig { width: 36px; }
.mkid .twig::before { left: 25px; }
.mkid.last .twig::before { height: 9px; }
.mkid .twig::after { left: 26px; }
.mkid .box { left: 21px; }
.mkid .ic { margin-right: 5px; }
.mfoot { height: 18px; background: #d3d4d6; flex: none; }
.time { flex: 1; display: flex; flex-direction: column; overflow: hidden; }
.time > svg { display: block; flex: none; }
.sec { font: bold 12px "Noto Sans", sans-serif; fill: #6f7073; }
.cj { font: bold 11px "Noto Sans CJK SC", sans-serif; }
.tbar { flex: 1; display: flex; align-items: center; padding: 0 6px; }
.tbar svg { width: 6px; height: 9px; }
.tthumb { width: 981px; height: 15px; background: #d3d4d6; margin: 0 auto 0 5px; }
.zooms { position: absolute; right: 0; bottom: 19px; width: 69px; height: 22px; background: #d3d4d6; display: flex; gap: 7px; padding: 3px 0 0 3px; }

.studies { flex: none; height: 12px; border-top: 1px solid #111; display: flex; background: #ebecf0; overflow: hidden; }
.nv { width: 15px; height: 14px; border: 1px solid #8c8d91; background: #b4b5b9; margin-right: 1px; flex: none; }
.nv:first-child { width: 9px; }
.nv svg { display: block; width: 13px; height: 11px; }
.st { flex: none; height: 14px; line-height: 11px; white-space: nowrap; font-size: 13px; }
.st.model { width: 46px; border: 1px solid #111; border-top: 0; background: #aeafb3; margin-left: 3px; text-align: center; }
.st.cur { width: 83px; background: #d3d4d6; border-right: 1px solid #111; padding-left: 6px; font-size: 12.5px; }

.expand { position: absolute; left: 1324px; top: 377px; }
.dlg { position: absolute; z-index: 5; left: 1068px; top: 360px; width: 259px; height: 259px; border: 2px solid #7a7d97; border-radius: 9px; background: #ebecf0; overflow: hidden; box-shadow: inset 0 0 0 1px #b5b8cd; }
.dlg-title { height: 20px; background: #b2b4c9; display: flex; justify-content: space-between; font-weight: bold; line-height: 23px; padding: 0 7px 0 3px; }
.dlg-title i { width: 18px; height: 18px; margin-top: 1px; border: 1px solid #1b86dc; background: #ebecf0; display: flex; align-items: center; justify-content: center; }
.dlg-title svg { width: 8px; height: 8px; }
.dlg-body { display: flex; margin: 8px 3px 0 3px; height: 188px; border-left: 1px solid #777; border-top: 1px solid #777; }
.log { width: 230px; overflow: hidden; padding-left: 4px; flex: none; }
pre { margin: 0; font: 16px/18px "Liberation Mono", monospace; letter-spacing: .4px; height: 18px; }
.lh { margin-top: 0; }
.rule { height: 30px; padding: 22px 0 0 30px; display: flex; gap: 20px; }
.rule b { width: 110px; height: 1px; background: #111; flex: none; }
.rec { margin-bottom: 6px; }
.lbar { display: flex; align-items: center; height: 15px; padding-left: 13px; margin-top: -3px; }
.lbar svg { width: 9px; height: 12px; stroke-width: 2.4; }
.lbar b { width: 45px; height: 15px; background: #d3d4d6; margin: 0 125px 0 8px; }
.lv { display: flex; flex-direction: column; align-items: center; padding-top: 17px; width: 15px; }
.lv svg { width: 12px; height: 9px; stroke-width: 2.4; }
.lv b { width: 15px; height: 15px; background: #d3d4d6; margin: 95px 0 8px; }
.grip { position: absolute; right: 2px; bottom: 2px; }
</style>
